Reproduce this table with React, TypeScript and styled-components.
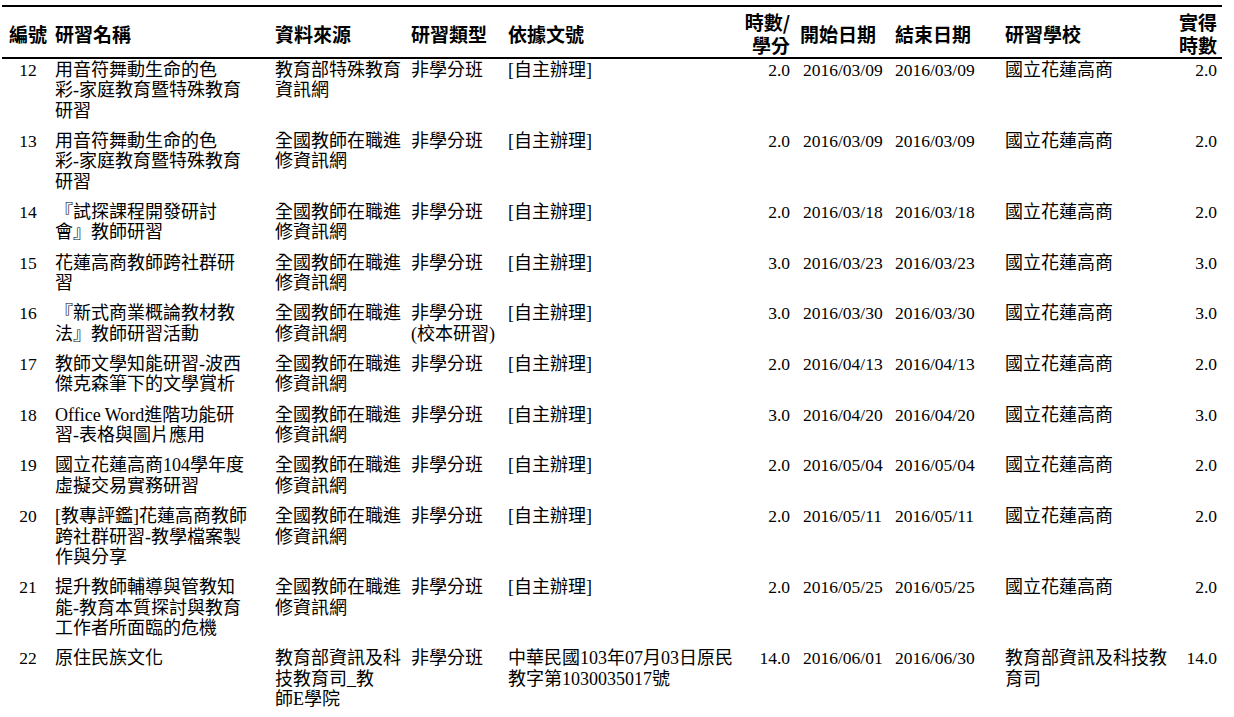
import React from "react";
import styled, { createGlobalStyle } from "styled-components";

const Global = createGlobalStyle`
  html, body { margin: 0; padding: 0; background: #fff; }
  body { overflow: hidden; color: #000; }
`;

const COLS = "48px 223px 136px 97px 232px 50px 105px 110px 163px 49px";

const Table = styled.div`
  margin: 5px 0 0 2px;
  width: 1220px;
  box-sizing: border-box;
  padding: 0 5px 0 2px;
  border-top: 2px solid #000;
`;

const HeadRow = styled.div`
  display: grid;
  grid-template-columns: ${COLS};
  align-items: center;
  padding: 3px 5px 1px 2px;
  margin: 0 -5px 0 -2px;
  border-bottom: 2px solid #000;
  font-family: "Noto Sans CJK TC", "Noto Sans", sans-serif;
  font-weight: 700;
  font-size: 19px;
  line-height: 23px;
`;

type Align = "left" | "center" | "right";

const HeadCell = styled.div<{ $align?: Align; $pad?: number }>`
  text-align: ${(p) => p.$align || "left"};
  padding-left: ${(p) => p.$pad ?? 0}px;
  white-space: pre;
`;

const Body = styled.div`
  padding-top: 0.5px;
`;

const Row = styled.div`
  display: grid;
  grid-template-columns: ${COLS};
  align-items: start;
  padding-bottom: 9.7px;
  font-family: "Liberation Serif", "Noto Sans CJK TC", serif;
  font-weight: 400;
  font-size: 18px;
  line-height: 20.5px;
`;

const Cell = styled.div<{ $align?: Align; $pad?: number; $num?: boolean }>`
  text-align: ${(p) => p.$align || "left"};
  padding-left: ${(p) => p.$pad ?? 0}px;
  font-size: ${(p) => (p.$num ? "17.5px" : "18px")};
  white-space: pre;
`;

type Rec = {
  no: string;
  name: string;
  src: string;
  type: string;
  doc: string;
  hrs: string;
  start: string;
  end: string;
  school: string;
  got: string;
};

const SRC = "全國教師在職進\n修資訊網";
const SCH = "國立花蓮高商";
const DOC = "[自主辦理]";
const TYP = "非學分班";

const rows: Rec[] = [
  { no: "12", name: "用音符舞動生命的色\n彩-家庭教育暨特殊教育\n研習", src: "教育部特殊教育\n資訊網", type: TYP, doc: DOC, hrs: "2.0", start: "2016/03/09", end: "2016/03/09", school: SCH, got: "2.0" },
  { no: "13", name: "用音符舞動生命的色\n彩-家庭教育暨特殊教育\n研習", src: SRC, type: TYP, doc: DOC, hrs: "2.0", start: "2016/03/09", end: "2016/03/09", school: SCH, got: "2.0" },
  { no: "14", name: "『試探課程開發研討\n會』教師研習", src: SRC, type: TYP, doc: DOC, hrs: "2.0", start: "2016/03/18", end: "2016/03/18", school: SCH, got: "2.0" },
  { no: "15", name: "花蓮高商教師跨社群研\n習", src: SRC, type: TYP, doc: DOC, hrs: "3.0", start: "2016/03/23", end: "2016/03/23", school: SCH, got: "3.0" },
  { no: "16", name: "『新式商業概論教材教\n法』教師研習活動", src: SRC, type: "非學分班\n(校本研習)", doc: DOC, hrs: "3.0", start: "2016/03/30", end: "2016/03/30", school: SCH, got: "3.0" },
  { no: "17", name: "教師文學知能研習-波西\n傑克森筆下的文學賞析", src: SRC, type: TYP, doc: DOC, hrs: "2.0", start: "2016/04/13", end: "2016/04/13", school: SCH, got: "2.0" },
  { no: "18", name: "Office Word進階功能研\n習-表格與圖片應用", src: SRC, type: TYP, doc: DOC, hrs: "3.0", start: "2016/04/20", end: "2016/04/20", school: SCH, got: "3.0" },
  { no: "19", name: "國立花蓮高商104學年度\n虛擬交易實務研習", src: SRC, type: TYP, doc: DOC, hrs: "2.0", start: "2016/05/04", end: "2016/05/04", school: SCH, got: "2.0" },
  { no: "20", name: "[教專評鑑]花蓮高商教師\n跨社群研習-教學檔案製\n作與分享", src: SRC, type: TYP, doc: DOC, hrs: "2.0", start: "2016/05/11", end: "2016/05/11", school: SCH, got: "2.0" },
  { no: "21", name: "提升教師輔導與管教知\n能-教育本質探討與教育\n工作者所面臨的危機", src: SRC, type: TYP, doc: DOC, hrs: "2.0", start: "2016/05/25", end: "2016/05/25", school: SCH, got: "2.0" },
  { no: "22", name: "原住民族文化", src: "教育部資訊及科\n技教育司_教\n師E學院", type: TYP, doc: "中華民國103年07月03日原民\n教字第1030035017號", hrs: "14.0", start: "2016/06/01", end: "2016/06/30", school: "教育部資訊及科技教\n育司", got: "14.0" },
];

export default function App() {
  return (
    <>
      <Global />
      <Table>
        <HeadRow>
          <HeadCell $align="center">編號</HeadCell>
          <HeadCell $pad={3}>研習名稱</HeadCell>
          <HeadCell>資料來源</HeadCell>
          <HeadCell>研習類型</HeadCell>
          <HeadCell>依據文號</HeadCell>
          <HeadCell $align="right">{"時數/\n學分"}</HeadCell>
          <HeadCell $pad={10}>開始日期</HeadCell>
          <HeadCell>結束日期</HeadCell>
          <HeadCell>研習學校</HeadCell>
          <HeadCell $align="right">{"實得\n時數"}</HeadCell>
        </HeadRow>
        <Body>
          {rows.map((r) => (
            <Row key={r.no}>
              <Cell $align="center" $num>{r.no}</Cell>
              <Cell $pad={3}>{r.name}</Cell>
              <Cell>{r.src}</Cell>
              <Cell>{r.type}</Cell>
              <Cell>{r.doc}</Cell>
              <Cell $align="right" $num>{r.hrs}</Cell>
              <Cell $pad={13} $num>{r.start}</Cell>
              <Cell $num>{r.end}</Cell>
              <Cell>{r.school}</Cell>
              <Cell $align="right" $num>{r.got}</Cell>
            </Row>
          ))}
        </Body>
      </Table>
    </>
  );
}
